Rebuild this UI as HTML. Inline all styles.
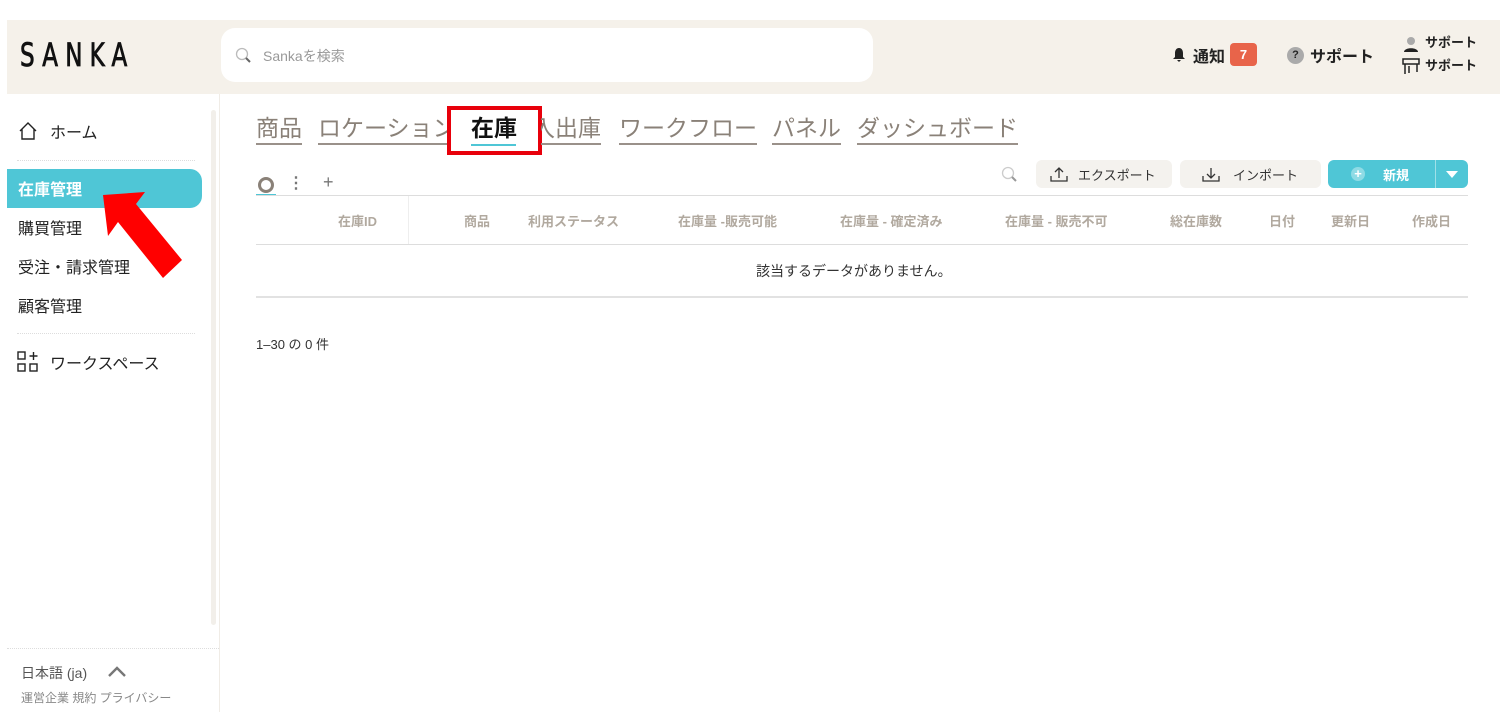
<!DOCTYPE html>
<html><head><meta charset="utf-8"><style>
*{box-sizing:border-box;margin:0;padding:0}
body{width:1500px;height:712px;background:#fff;font-family:"Liberation Sans","Noto Sans CJK JP",sans-serif;position:relative;overflow:hidden;color:#222}
.abs{position:absolute}
.hdr{left:7px;top:20px;width:1493px;height:74px;background:#f5f1ea}
.logo{left:20px;top:36px;font-size:32px;letter-spacing:9px;font-weight:normal;font-family:"Liberation Sans Narrow","DejaVu Sans Condensed",sans-serif;color:#111;transform:scaleX(0.8);transform-origin:left top;-webkit-text-stroke:0.8px #111}
.search{left:221px;top:28px;width:652px;height:54px;background:#fff;border-radius:14px}
.search span{position:absolute;left:42px;top:18px;font-size:14px;color:#999}
.nav{font-size:16px;color:#222}
.tab{top:113px;font-size:23px;color:#8a8178;border-bottom:2px solid #9a918a;line-height:30px}
.th{top:211px;font-size:13px;color:#b1a99f;font-weight:bold}
.btn{top:160px;height:28px;background:#f4f2ee;border-radius:6px;font-size:13px;color:#333}
</style></head><body>
<div class="abs hdr"></div>
<div class="abs logo">SANKA</div>
<div class="abs search"><svg class="abs" style="left:14px;top:19px" width="18" height="18" viewBox="0 0 18 18"><circle cx="7" cy="7" r="5.5" fill="none" stroke="#bbb" stroke-width="1.3"/><path d="M11 11l4 4" stroke="#666" stroke-width="2"/></svg><span>Sankaを検索</span></div>
<svg class="abs" style="left:1172px;top:47px" width="14" height="16" viewBox="0 0 14 16"><path d="M7 1c-3 0-4 3-4 5v4l-2 2h12l-2-2V6c0-2-1-5-4-5z M5 13h4l-2 2z" fill="#222"/></svg>
<div class="abs" style="left:1193px;top:43px;font-size:16px;font-weight:bold">通知</div>
<div class="abs" style="left:1230px;top:43px;width:27px;height:23px;background:#e8644a;border-radius:4px;color:#fff;font-size:13px;font-weight:bold;text-align:center;line-height:23px">7</div>
<div class="abs" style="left:1287px;top:47px;width:17px;height:17px;border-radius:50%;background:#aaa;color:#222;font-size:11px;text-align:center;line-height:17px;font-weight:bold">?</div>
<div class="abs" style="left:1310px;top:43px;font-size:16px;font-weight:bold">サポート</div>
<svg class="abs" style="left:1401px;top:36px" width="20" height="40" viewBox="0 0 20 40"><circle cx="10" cy="5" r="4" fill="#aaa"/><path d="M3 16c0-5 14-5 14 0z" fill="#222"/><path d="M2 23h16v5H2zM4 28v10M16 28v8M8 30v7" stroke="#222" fill="none" stroke-width="1.5"/></svg>
<div class="abs" style="left:1425px;top:32px;font-size:13px;font-weight:bold">サポート</div>
<div class="abs" style="left:1425px;top:55px;font-size:13px;font-weight:bold">サポート</div>

<!-- sidebar -->
<svg class="abs" style="left:18px;top:121px" width="20" height="20" viewBox="0 0 20 20"><path d="M2 10L10 2l8 8M4 8v10h12V8" fill="none" stroke="#222" stroke-width="1.4"/></svg>
<div class="abs nav" style="left:50px;top:119px">ホーム</div>
<div class="abs" style="left:17px;top:160px;width:178px;border-top:1px dotted #ddd"></div>
<div class="abs" style="left:7px;top:169px;width:195px;height:39px;background:#4fc6d6;border-radius:0 12px 12px 0"></div>
<div class="abs nav" style="left:18px;top:176px;color:#fff;font-weight:bold">在庫管理</div>
<div class="abs nav" style="left:18px;top:215px">購買管理</div>
<div class="abs nav" style="left:18px;top:254px">受注・請求管理</div>
<div class="abs nav" style="left:18px;top:293px">顧客管理</div>
<div class="abs" style="left:17px;top:333px;width:178px;border-top:1px dotted #ddd"></div>
<svg class="abs" style="left:17px;top:351px" width="22" height="22" viewBox="0 0 22 22"><rect x="1" y="1" width="7" height="7" fill="none" stroke="#222" stroke-width="1.4"/><rect x="1" y="13" width="7" height="7" fill="none" stroke="#222" stroke-width="1.4"/><rect x="13" y="13" width="7" height="7" fill="none" stroke="#222" stroke-width="1.4"/><path d="M16.5 1v8M12.5 5h8" stroke="#222" stroke-width="1.4"/></svg>
<div class="abs nav" style="left:50px;top:350px">ワークスペース</div>
<div class="abs" style="left:211px;top:110px;width:5px;height:515px;background:#f2efea;border-radius:3px"></div>
<div class="abs" style="left:219px;top:94px;width:1px;height:618px;background:#f0ece6"></div>
<div class="abs" style="left:7px;top:648px;width:212px;border-top:1px dotted #ddd"></div>
<div class="abs" style="left:21px;top:663px;font-size:14px;color:#555">日本語 (ja)</div>
<svg class="abs" style="left:107px;top:666px" width="20" height="12" viewBox="0 0 20 12"><path d="M2 10l8-8 8 8" fill="none" stroke="#777" stroke-width="2.4"/></svg>
<div class="abs" style="left:21px;top:689px;font-size:12px;color:#888">運営企業 規約 プライバシー</div>

<!-- tabs -->
<div class="abs tab" style="left:256px">商品</div>
<div class="abs tab" style="left:318px;width:130px;overflow:hidden;white-space:nowrap">ロケーション</div>
<div class="abs" style="left:471px;top:113px;font-size:23px;line-height:30px;color:#111;font-weight:bold">在庫</div>
<div class="abs" style="left:471px;top:144px;width:45px;height:2px;background:#4fc6d6"></div>
<div class="abs" style="left:447px;top:106px;width:95px;height:49px;border:4px solid #e8000b"></div>
<div class="abs tab" style="left:541px;width:60px;overflow:hidden;white-space:nowrap;direction:rtl">入出庫</div>
<div class="abs tab" style="left:619px">ワークフロー</div>
<div class="abs tab" style="left:772px">パネル</div>
<div class="abs tab" style="left:857px">ダッシュボード</div>

<!-- toolbar -->
<div class="abs" style="left:258px;top:177px;width:16px;height:16px;border:3px solid #8a8178;border-radius:50%"></div>
<div class="abs" style="left:256px;top:194px;width:20px;height:2px;background:#4fc6d6"></div>
<div class="abs" style="left:288px;top:173px;font-size:16px;color:#777;font-weight:bold">⋮</div>
<div class="abs" style="left:323px;top:172px;font-size:18px;color:#777">+</div>
<div class="abs" style="left:256px;top:195px;width:1212px;height:1px;background:#ddd"></div>
<svg class="abs" style="left:1001px;top:166px" width="18" height="18" viewBox="0 0 18 18"><circle cx="7" cy="7" r="5.5" fill="none" stroke="#ccc" stroke-width="1.3"/><path d="M11 11l4 4" stroke="#999" stroke-width="2"/></svg>
<div class="abs btn" style="left:1036px;width:136px"><svg class="abs" style="left:14px;top:6px" width="18" height="16" viewBox="0 0 18 16"><path d="M9 12V2M5 6l4-4 4 4M1 10v5h16v-5" fill="none" stroke="#333" stroke-width="1.3"/></svg><span class="abs" style="left:42px;top:5px">エクスポート</span></div>
<div class="abs btn" style="left:1180px;width:141px"><svg class="abs" style="left:22px;top:6px" width="18" height="16" viewBox="0 0 18 16"><path d="M9 2v10M5 8l4 4 4-4M1 10v5h16v-5" fill="none" stroke="#333" stroke-width="1.3"/></svg><span class="abs" style="left:53px;top:5px">インポート</span></div>
<div class="abs" style="left:1328px;top:160px;width:140px;height:28px;background:#4fc6d6;border-radius:6px"></div>
<div class="abs" style="left:1351px;top:167px;width:14px;height:14px;border-radius:50%;background:#8fdbe5;color:#fff;font-size:13px;line-height:14px;text-align:center;font-weight:bold">+</div>
<div class="abs" style="left:1383px;top:165px;font-size:13px;color:#fff;font-weight:bold">新規</div>
<div class="abs" style="left:1435px;top:160px;width:1px;height:28px;background:#9fe0e8"></div>
<svg class="abs" style="left:1446px;top:171px" width="12" height="7" viewBox="0 0 12 7"><path d="M0 0h12L6 7z" fill="#fff"/></svg>

<!-- table -->
<div class="abs th" style="left:338px">在庫ID</div>
<div class="abs" style="left:408px;top:196px;width:1px;height:48px;background:#eee"></div>
<div class="abs th" style="left:464px">商品</div>
<div class="abs th" style="left:528px">利用ステータス</div>
<div class="abs th" style="left:678px">在庫量 -販売可能</div>
<div class="abs th" style="left:840px">在庫量 - 確定済み</div>
<div class="abs th" style="left:1005px">在庫量 - 販売不可</div>
<div class="abs th" style="left:1170px">総在庫数</div>
<div class="abs th" style="left:1269px">日付</div>
<div class="abs th" style="left:1331px">更新日</div>
<div class="abs th" style="left:1412px">作成日</div>
<div class="abs" style="left:256px;top:244px;width:1212px;height:1px;background:#ddd"></div>
<div class="abs" style="left:756px;top:261px;font-size:14px;color:#333">該当するデータがありません。</div>
<div class="abs" style="left:256px;top:296px;width:1212px;height:2px;background:#e2e2e2"></div>
<div class="abs" style="left:256px;top:334px;font-size:13px;color:#333">1–30 の 0 件</div>

<!-- red arrow -->
<svg class="abs" style="left:100px;top:190px" width="90" height="92" viewBox="0 0 90 92"><path d="M3 5L45 2 36 14 82 70 63 88 18 32 8 46z" fill="#f00"/></svg>
</body></html>
